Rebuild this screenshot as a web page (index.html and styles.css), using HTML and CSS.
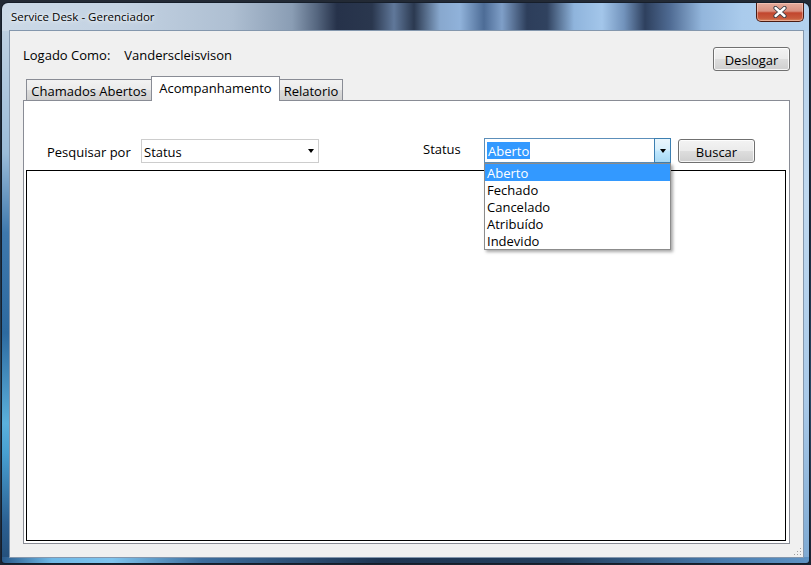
FILE: index.html
```html
<!DOCTYPE html>
<html lang="pt">
<head>
<meta charset="utf-8">
<title>Service Desk - Gerenciador</title>
<link rel="stylesheet" href="styles.css">
</head>
<body>
<div class="desk">
  <div class="window">
    <div class="titlebar">
      <span class="title">Service Desk - Gerenciador</span>
      <span class="close">
        <svg width="16" height="12" viewBox="0 0 16 12">
          <path d="M3.5 2 L12.5 10 M12.5 2 L3.5 10" stroke="#3a3f47" stroke-width="4.2" stroke-linecap="round"/>
          <path d="M3.5 2 L12.5 10 M12.5 2 L3.5 10" stroke="#ffffff" stroke-width="2.4" stroke-linecap="round"/>
        </svg>
      </span>
    </div>
    <div class="client">
      <div class="toprow">
        <div class="user"><span class="lbl">Logado Como:</span><span class="name">Vanderscleisvison</span></div>
        <button class="btn logout">Deslogar</button>
      </div>
      <div class="tabs">
        <div class="tab t1">Chamados Abertos</div>
        <div class="tab t2 active">Acompanhamento</div>
        <div class="tab t3">Relatorio</div>
      </div>
      <div class="panel">
        <div class="search">
          <span class="plabel">Pesquisar por</span>
          <div class="combo c1"><span class="val">Status</span><span class="tri"></span></div>
          <span class="slabel">Status</span>
          <div class="combo c2">
            <span class="sel">Aberto</span>
            <span class="dbtn"><span class="tri"></span></span>
            <ul class="dropdown">
              <li class="hl">Aberto</li>
              <li>Fechado</li>
              <li>Cancelado</li>
              <li>Atribuído</li>
              <li>Indevido</li>
            </ul>
          </div>
          <button class="btn buscar">Buscar</button>
        </div>
        <div class="listbox"></div>
      </div>
      <svg class="grip" width="10" height="10" viewBox="0 0 10 10">
        <g fill="#a0a0a0">
          <rect x="8" y="2" width="1" height="1"/>
          <rect x="5" y="5" width="1" height="1"/><rect x="8" y="5" width="1" height="1"/>
          <rect x="2" y="8" width="1" height="1"/><rect x="5" y="8" width="1" height="1"/><rect x="8" y="8" width="1" height="1"/>
        </g>
      </svg>
    </div>
  </div>
</div>
</body>
</html>
```
FILE: styles.css
```css
* { box-sizing: border-box; }
html, body { margin: 0; padding: 0; }
body {
  width: 811px;
  height: 565px;
  overflow: hidden;
  background: linear-gradient(180deg, #232a35 0%, #1a2a3c 40%, #284a66 70%, #1b2432 100%);
  font-family: "Open Sans", "Noto Sans", "DejaVu Sans", sans-serif;
  font-size: 13px;
  color: #000;
}
.desk {
  height: 565px;
  padding: 3px 0 0 2px;
}
.window {
  position: relative;
  width: 807px;
  height: 560px;
  display: flex;
  flex-direction: column;
  padding: 0 6px 6px 8px;
  border-radius: 6px 6px 3px 3px;
  box-shadow: 0 0 0 1px rgba(20, 28, 40, 0.85);
  background:
    linear-gradient(90deg, #cbd9e7 0px, #c3d2e2 120px, #aebfd2 230px, #8a9db4 290px, #55667f 315px, #26324a 335px, #2a374e 370px, #60789a 392px, #2b3950 412px, #88a8ce 438px, #90b2da 458px, #4d6c96 482px, #7f9fc8 500px, #2d3e5b 525px, #30425f 545px, #8fb4dc 572px, #a3c6ea 600px, #7293bc 622px, #2e405e 643px, #4f6b93 668px, #93b6dc 700px, #aacbec 740px, #b3d1ee 807px) left top / 100% 28px no-repeat,
    linear-gradient(90deg, #2a5b8c 0px, #6fb8e6 50px, #7fc4ee 110px, #3d6d9d 200px, #1f3552 380px, #24405f 560px, #4a7cae 720px, #5f93c4 807px) left bottom / 100% 6px no-repeat,
    linear-gradient(180deg, #c6d5e4 0px, #9bbcd9 150px, #3e78ad 230px, #2d6aa0 330px, #5bb0dc 420px, #48a0d2 450px, #2b5f91 520px, #244e78 560px) left top / 8px 100% no-repeat,
    linear-gradient(180deg, #b9d3ec 0px, #bfd8ef 200px, #a9c9e8 400px, #7ea9d2 560px) right top / 6px 100% no-repeat,
    #7d9dbf;
}
.titlebar {
  height: 28px;
  display: flex;
  justify-content: space-between;
  align-items: flex-start;
}
.title {
  margin: 6px 0 0 1px;
  font-size: 11.5px;
  line-height: 16px;
  color: #000;
  text-shadow: 0 0 6px rgba(255, 255, 255, 0.9), 0 0 3px rgba(255, 255, 255, 0.9);
}
.close {
  width: 48px;
  height: 19px;
  margin-right: -1px;
  border: 1px solid #4a1b13;
  border-top: none;
  border-radius: 0 0 5px 5px;
  background: linear-gradient(180deg, #e6ab9c 0%, #d9907f 45%, #c2462e 55%, #c85a3c 85%, #d98a62 100%);
  box-shadow: inset 0 0 0 1px rgba(255, 220, 210, 0.45);
  display: flex;
  align-items: center;
  justify-content: center;
}
.close svg { display: block; }
.client {
  position: relative;
  flex: 1;
  display: flex;
  flex-direction: column;
  padding: 16px 13px 13px 13px;
  background: #f0f0f0;
  box-shadow: 0 0 0 1px #8497ad;
}
.toprow {
  height: 24px;
  display: flex;
  justify-content: space-between;
  align-items: flex-start;
}
.user {
  line-height: 17px;
  color: #000;
}
.lbl { margin-right: 14px; }
.btn {
  font-family: inherit;
  font-size: 13px;
  color: #000;
  border: 1px solid #707070;
  border-radius: 3px;
  background: linear-gradient(180deg, #f3f3f3 0%, #ebebeb 48%, #dddddd 52%, #cfcfcf 100%);
  box-shadow: inset 0 0 0 1px rgba(255, 255, 255, 0.8);
  padding: 1px 0 0 0;
  margin: 0;
}
.logout { width: 77px; height: 24px; line-height: 20px; }
.tabs {
  margin-top: 5px;
  height: 24px;
  display: flex;
  align-items: flex-end;
  padding-left: 3px;
}
.tab {
  height: 21px;
  line-height: 20px;
  padding-top: 1px;
  text-align: center;
  white-space: nowrap;
  border: 1px solid #898c95;
  border-bottom: none;
  background: linear-gradient(180deg, #f2f2f2 0%, #ebebeb 50%, #dddddd 51%, #cfcfcf 100%);
  color: #000;
}
.t1 { width: 126px; }
.t2 { width: 129px; margin-left: -1px; }
.t3 { width: 64px; margin-left: -1px; }
.tab.active {
  position: relative;
  z-index: 1;
  height: 25px;
  margin-bottom: -1px;
  padding-top: 0;
  line-height: 22px;
  background: #ffffff;
}
.panel {
  flex: 1;
  display: flex;
  flex-direction: column;
  border: 1px solid #898c95;
  background: #ffffff;
  padding: 38px 3px 2px 2px;
}
.search {
  height: 24px;
  display: flex;
  align-items: flex-start;
}
.plabel {
  margin-left: 21px;
  width: 94px;
  padding-top: 1px;
  line-height: 24px;
}
.slabel {
  margin-left: 104px;
  width: 61px;
  padding-top: 1px;
  line-height: 18px;
}
.combo {
  position: relative;
  display: flex;
  align-items: center;
  background: #ffffff;
}
.c1 {
  width: 178px;
  height: 24px;
  border: 1px solid #cdcdcd;
}
.c1 .val { margin-left: 2px; padding-top: 1px; line-height: 22px; }
.c1 .tri { margin-left: auto; margin-right: 4px; }
.tri {
  width: 0;
  height: 0;
  border-left: 3.5px solid transparent;
  border-right: 3.5px solid transparent;
  border-top: 4px solid #000;
}
.c2 {
  width: 187px;
  height: 25px;
  margin-top: -1px;
  border: 1px solid #5c8fba;
  align-items: flex-start;
}
.sel {
  margin: 3px 0 0 2px;
  padding: 1px 1px 0 1px;
  height: 17px;
  line-height: 16px;
  background: #3399ff;
  color: #ffffff;
}
.dbtn {
  margin: -1px -1px -1px auto;
  width: 17px;
  height: 25px;
  border: 1px solid #3c7fb1;
  background: linear-gradient(180deg, #eaf6fd 0%, #d9f0fc 45%, #bee6fd 55%, #a7d9f5 100%);
  display: flex;
  align-items: center;
  justify-content: center;
}
.dropdown {
  position: absolute;
  top: 24px;
  left: -1px;
  width: 187px;
  margin: 0;
  padding: 0;
  list-style: none;
  border: 1px solid #8c8c8c;
  background: #ffffff;
  box-shadow: 2px 2px 3px rgba(0, 0, 0, 0.35);
  z-index: 5;
}
.dropdown li {
  height: 17px;
  padding: 1px 0 0 2px;
  line-height: 16px;
  color: #000;
}
.dropdown li.hl { background: #3399ff; color: #ffffff; }
.buscar {
  margin-left: 7px;
  width: 77px;
  height: 24px;
  line-height: 20px;
}
.listbox {
  flex: 1;
  margin-top: 7px;
  border: 1px solid #000;
  background: #ffffff;
}
.grip {
  position: absolute;
  right: 1px;
  bottom: 1px;
}
```
